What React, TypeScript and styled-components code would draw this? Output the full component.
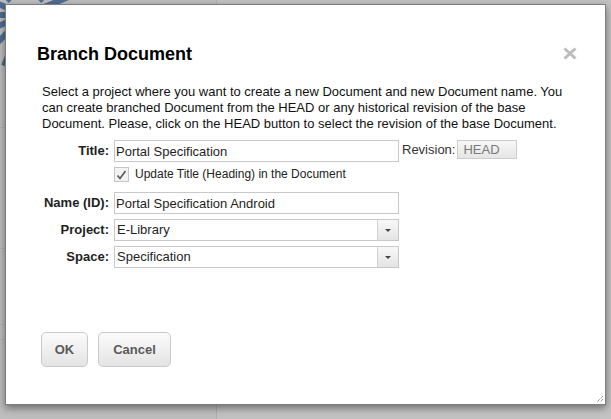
import React from 'react'
import styled, { createGlobalStyle } from 'styled-components'

const GlobalStyle = createGlobalStyle`
  html, body {
    margin: 0;
    padding: 0;
  }
  body {
    font-family: "Liberation Sans", Arial, sans-serif;
    background: #c2c2c2;
  }
`

const Page = styled.div`
  position: relative;
  width: 611px;
  height: 419px;
  overflow: hidden;
  background: #c2c2c2;
`

const Backdrop = styled.div`
  display: flex;
  height: 100%;
`

const Sidebar = styled.div`
  width: 216px;
  border-right: 1px solid #b0b0b0;
  background: #bebebe;
  display: flex;
  flex-direction: column;
`

const SideLogo = styled.div`
  height: 127px;
  border-bottom: 1px solid #b2b2b2;
`

const SideItem = styled.div<{ $h: number }>`
  height: ${(p) => p.$h}px;
  border-bottom: 1px solid #b2b2b2;
  color: #8a8a8a;
  font-size: 13px;
`

const Content = styled.div`
  flex: 1;
  background: #c3c3c3;
`

const Dialog = styled.div`
  position: absolute;
  left: 5px;
  top: 4px;
  width: 601px;
  height: 401px;
  box-sizing: border-box;
  background: #fff;
  border: 1px solid #7c7c7c;
  box-shadow: 0 3px 8px rgba(0, 0, 0, 0.45);
  display: flex;
  flex-direction: column;
  color: #1e1e1e;
`

const Header = styled.div`
  display: flex;
  align-items: flex-start;
  justify-content: space-between;
  padding: 38px 28px 0 31px;
`

const Title = styled.h1`
  margin: 0;
  font-size: 18px;
  line-height: 22px;
  font-weight: bold;
  color: #000;
`

const CloseButton = styled.button`
  border: 0;
  background: none;
  padding: 0;
  margin-top: 4px;
  width: 14px;
  height: 13px;
  display: flex;
  cursor: pointer;
`

const Body = styled.div`
  padding: 19px 36px 0 36px;
  display: flex;
  flex-direction: column;
`

const Intro = styled.p`
  margin: 0;
  font-size: 13px;
  line-height: 16px;
  color: #111;
`

const Form = styled.div`
  margin-top: 8px;
  display: grid;
  grid-template-columns: 67px auto;
  column-gap: 5px;
  align-items: start;
`

const Label = styled.label<{ $mt?: number }>`
  font-size: 13px;
  font-weight: bold;
  line-height: 22px;
  text-align: right;
  white-space: nowrap;
  color: #1e1e1e;
  margin-top: ${(p) => p.$mt ?? 0}px;
`

const Field = styled.div<{ $mt?: number }>`
  display: flex;
  align-items: flex-start;
  margin-top: ${(p) => p.$mt ?? 0}px;
`

const TextInput = styled.input`
  width: 285px;
  height: 22px;
  box-sizing: border-box;
  border: 1px solid #c8c8c8;
  padding: 0 1px;
  font-family: "Liberation Sans", Arial, sans-serif;
  font-size: 13px;
  color: #1e1e1e;
  outline: none;
`

const RevisionLabel = styled.span`
  margin-left: 3px;
  font-size: 13px;
  line-height: 20px;
  color: #333;
`

const RevisionButton = styled.button`
  margin-left: 2px;
  width: 60px;
  height: 19px;
  box-sizing: border-box;
  border: 1px solid #cdcdcd;
  background: linear-gradient(#f7f7f7, #e6e6e6);
  padding: 0 0 0 5px;
  text-align: left;
  font-family: "Liberation Sans", Arial, sans-serif;
  font-size: 13px;
  color: #7a7a7a;
`

const CheckRow = styled.label`
  grid-column: 2;
  margin-top: 5px;
  display: flex;
  align-items: center;
  gap: 6px;
  font-size: 12px;
  line-height: 15px;
  color: #222;
`

const CheckBox = styled.span`
  width: 15px;
  height: 15px;
  box-sizing: border-box;
  border: 1px solid #c4c4c4;
  background: #f3f3f3;
  display: flex;
  align-items: center;
  justify-content: center;
`

const Select = styled.div`
  width: 285px;
  height: 22px;
  box-sizing: border-box;
  border: 1px solid #c8c8c8;
  display: flex;
  font-size: 13px;
  color: #1e1e1e;
`

const SelectValue = styled.span`
  flex: 1;
  padding-left: 2px;
  line-height: 20px;
`

const SelectArrow = styled.span`
  width: 20px;
  border-left: 1px solid #d0d0d0;
  background: linear-gradient(#f8f8f8, #e4e4e4);
  display: flex;
  align-items: center;
  justify-content: center;
`

const Footer = styled.div`
  display: flex;
  gap: 10px;
  padding: 64px 0 0 35px;
`

const Button = styled.button<{ $w: number }>`
  width: ${(p) => p.$w}px;
  height: 35px;
  box-sizing: border-box;
  border: 1px solid #c9c9c9;
  border-radius: 5px;
  background: linear-gradient(#fbfbfb, #e4e4e4);
  font-family: "Liberation Sans", Arial, sans-serif;
  font-size: 13px;
  font-weight: bold;
  color: #5a5a5a;
  cursor: pointer;
`

const ResizeGrip = styled.span`
  position: absolute;
  right: 1px;
  bottom: 1px;
  display: flex;
`

const Logo = styled.svg`
  position: absolute;
  left: -30px;
  top: -40px;
`

function Sunburst() {
  const rays = Array.from({ length: 16 }, (_, i) => (i * Math.PI) / 8)
  return (
    <Logo width="110" height="110" viewBox="-55 -55 110 110">
      {rays.map((a, i) => (
        <line
          key={i}
          x1={Math.cos(a) * 20}
          y1={Math.sin(a) * 20}
          x2={Math.cos(a) * 55}
          y2={Math.sin(a) * 55}
          stroke="#4e6d93"
          strokeWidth="6"
        />
      ))}
    </Logo>
  )
}

function Arrow() {
  return (
    <svg width="6" height="3" viewBox="0 0 6 3">
      <path d="M0 0h6L3 3z" fill="#444" />
    </svg>
  )
}

const App: React.FC = () => {
  return (
    <>
      <GlobalStyle />
      <Page>
        <Backdrop>
          <Sidebar>
            <SideLogo />
            <SideItem $h={120} />
            <SideItem $h={75} />
            <SideItem $h={14} />
          </Sidebar>
          <Content />
        </Backdrop>
        <Sunburst />
        <Dialog>
          <Header>
            <Title>Branch Document</Title>
            <CloseButton aria-label="Close">
              <svg width="14" height="13" viewBox="0 0 14 13">
                <path d="M1.5 1.5l11 10M12.5 1.5l-11 10" stroke="#bcbcbc" strokeWidth="3" />
              </svg>
            </CloseButton>
          </Header>
          <Body>
            <Intro>
              Select a project where you want to create a new Document and new Document name. You
              can create branched Document from the HEAD or any historical revision of the base
              Document. Please, click on the HEAD button to select the revision of the base Document.
            </Intro>
            <Form>
              <Label>Title:</Label>
              <Field>
                <TextInput defaultValue="Portal Specification" />
                <RevisionLabel>Revision:</RevisionLabel>
                <RevisionButton>HEAD</RevisionButton>
              </Field>
              <CheckRow>
                <CheckBox>
                  <svg width="11" height="10" viewBox="0 0 11 10">
                    <path d="M1.5 5.5l2.5 3L9.5 1" stroke="#555" strokeWidth="1.6" fill="none" />
                  </svg>
                </CheckBox>
                Update Title (Heading) in the Document
              </CheckRow>
              <Label $mt={10}>Name (ID):</Label>
              <Field $mt={10}>
                <TextInput defaultValue="Portal Specification Android" />
              </Field>
              <Label $mt={5}>Project:</Label>
              <Field $mt={5}>
                <Select>
                  <SelectValue>E-Library</SelectValue>
                  <SelectArrow>
                    <Arrow />
                  </SelectArrow>
                </Select>
              </Field>
              <Label $mt={5}>Space:</Label>
              <Field $mt={5}>
                <Select>
                  <SelectValue>Specification</SelectValue>
                  <SelectArrow>
                    <Arrow />
                  </SelectArrow>
                </Select>
              </Field>
            </Form>
          </Body>
          <Footer>
            <Button $w={47}>OK</Button>
            <Button $w={73}>Cancel</Button>
          </Footer>
          <ResizeGrip>
            <svg width="8" height="8" viewBox="0 0 8 8">
              <path d="M7 1L1 7M7 4L4 7" stroke="#666" strokeWidth="1" strokeDasharray="1 1" />
            </svg>
          </ResizeGrip>
        </Dialog>
      </Page>
    </>
  )
}

export default App
